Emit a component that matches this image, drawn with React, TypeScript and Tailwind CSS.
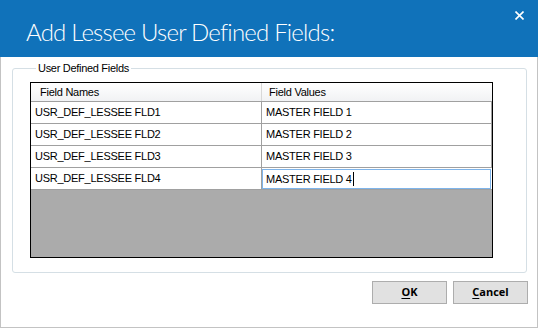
import React from "react";

const rows = [
  { name: "USR_DEF_LESSEE FLD1", value: "MASTER FIELD 1" },
  { name: "USR_DEF_LESSEE FLD2", value: "MASTER FIELD 2" },
  { name: "USR_DEF_LESSEE FLD3", value: "MASTER FIELD 3" },
  { name: "USR_DEF_LESSEE FLD4", value: "MASTER FIELD 4" },
];

const App: React.FC = () => {
  return (
    <div className="w-[538px] h-[328px] bg-white flex flex-col font-['Liberation_Sans',Arial,sans-serif]">
      {/* title bar */}
      <div className="h-[57px] bg-[#1072ba] flex justify-between shrink-0">
        <h1 className="pl-[26px] pt-[17px] text-[24px] leading-[30px] font-light text-white font-['Lato',sans-serif] tracking-[-0.8px]">
          Add Lessee User Defined Fields:
        </h1>
        <button className="mr-[14px] mt-[11px] w-[9px] h-[9px]">
          <svg width="9" height="9" viewBox="0 0 9 9">
            <path d="M0.5 0.5 L8.5 8.5 M8.5 0.5 L0.5 8.5" stroke="white" strokeWidth="1.6" />
          </svg>
        </button>
      </div>

      {/* body */}
      <div className="flex-1 border-x border-b border-[#c3c3c3] pl-[11px] pr-[9px] pt-[5px] flex flex-col">
        <fieldset className="w-[515px] h-[211px] border border-[#d5dfe5] rounded-[3px] pl-[17px] pt-[7px]">
          <legend className="ml-[6px] px-[2px] text-[11px] leading-[13px] tracking-[-0.3px] text-black">
            User Defined Fields
          </legend>

          <div className="w-[463px] h-[176px] border border-black bg-[#ababab] text-[11px] tracking-[-0.25px] text-black">
            <div className="flex h-[19px] bg-gradient-to-b from-white to-[#f1f2f4] border-b border-[#a0a0a0]">
              <div className="w-[231px] border-r border-[#d8d8d8] pl-[9px] leading-[18px]">Field Names</div>
              <div className="flex-1 pl-[7px] leading-[18px]">Field Values</div>
            </div>
            {rows.map((r, i) => (
              <div key={r.name} className="flex h-[22px] bg-white border-b border-[#a0a0a0]">
                <div className="w-[231px] border-r border-[#a0a0a0] pl-[4px] leading-[21px]">{r.name}</div>
                {i === rows.length - 1 ? (
                  <div className="flex-1 pt-px pr-px">
                    <div className="h-[20px] border border-[#7eb4ea] pl-[3px] leading-[18px] flex items-center">
                      {r.value}
                      <span className="inline-block w-px h-[14px] bg-black ml-px" />
                    </div>
                  </div>
                ) : (
                  <div className="flex-1 pl-[4px] leading-[21px] border-r border-[#a0a0a0]">{r.value}</div>
                )}
              </div>
            ))}
          </div>
        </fieldset>

        <div className="flex justify-end gap-[6px] mt-[8px]">
          <button className="w-[75px] h-[23px] bg-[#e1e1e1] border border-[#adadad] text-[11px] font-bold font-['Open_Sans',sans-serif] text-black">
            <span className="underline underline-offset-2">O</span>K
          </button>
          <button className="w-[75px] h-[23px] bg-[#e1e1e1] border border-[#adadad] text-[11px] font-bold font-['Open_Sans',sans-serif] text-black">
            <span className="underline underline-offset-2">C</span>ancel
          </button>
        </div>
      </div>
    </div>
  );
};

export default App;
